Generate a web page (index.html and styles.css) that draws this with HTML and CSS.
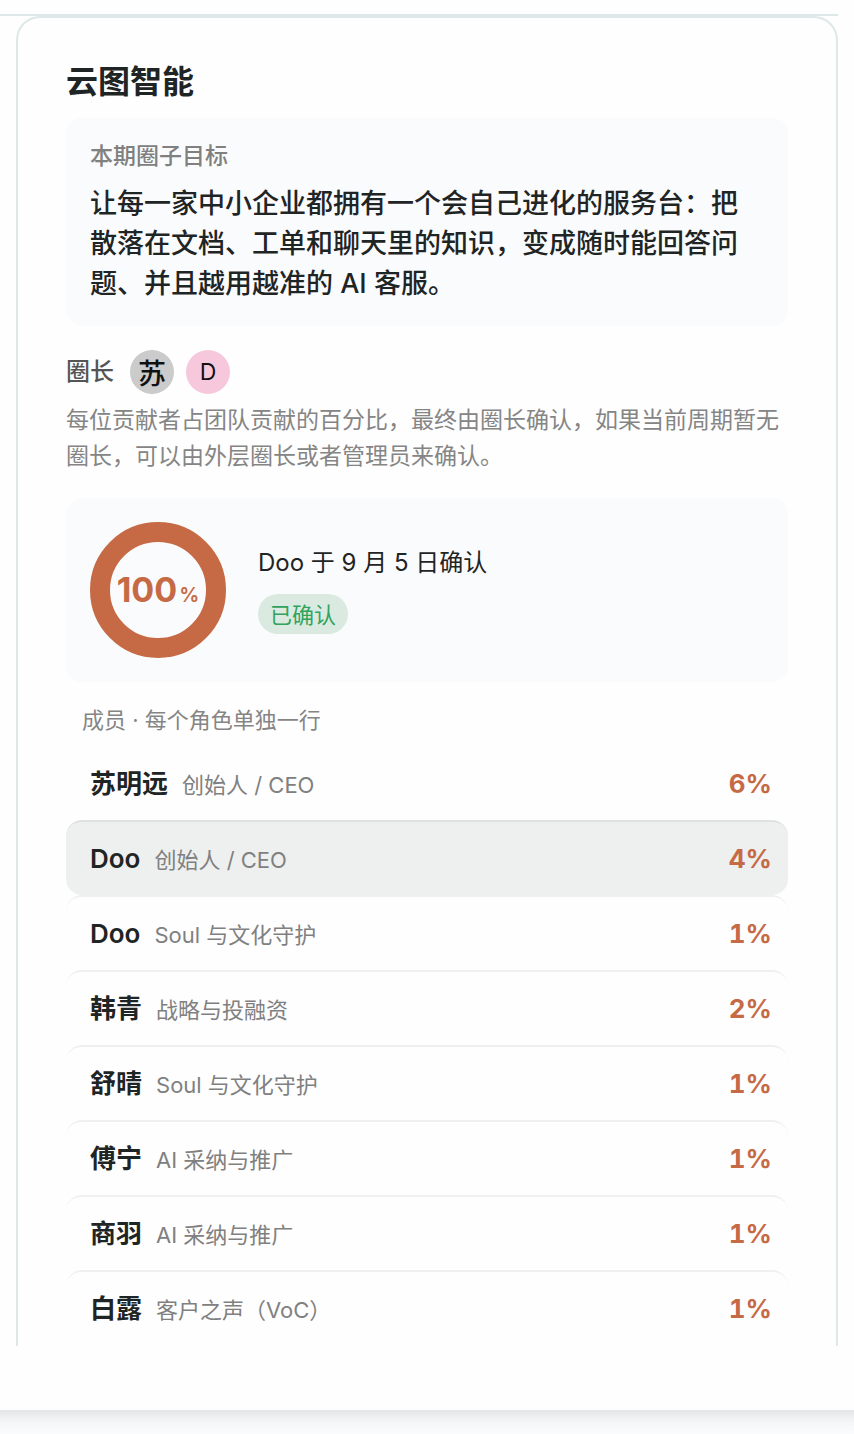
FILE: index.html
```html
<!DOCTYPE html>
<html lang="zh-CN">
<head>
<meta charset="utf-8">
<meta name="viewport" content="width=device-width, initial-scale=1">
<title>云图智能</title>
<link rel="stylesheet" href="styles.css">
</head>
<body>
<main class="sheet">
  <div class="viewport">
    <article class="card">
      <h1 class="title">云图智能</h1>
      <section class="goal">
        <h2 class="goal-label">本期圈子目标</h2>
        <p class="goal-text">让每一家中小企业都拥有一个会自己进化的服务台：把散落在文档、工单和聊天里的知识，变成随时能回答问题、并且越用越准的 AI 客服。</p>
      </section>
      <div class="leads">
        <span class="leads-label">圈长</span>
        <span class="avatar avatar-gray">苏</span>
        <span class="avatar avatar-pink">D</span>
      </div>
      <p class="hint">每位贡献者占团队贡献的百分比，最终由圈长确认，如果当前周期暂无圈长，可以由外层圈长或者管理员来确认。</p>
      <section class="summary">
        <div class="ring"><span class="ring-value">100</span><span class="ring-unit">%</span></div>
        <div class="status">
          <p class="status-text">Doo 于 9 月 5 日确认</p>
          <span class="badge">已确认</span>
        </div>
      </section>
      <h2 class="list-label">成员 · 每个角色单独一行</h2>
      <ul class="members">
        <li class="member"><span class="name">苏明远</span><span class="role">创始人 / CEO</span><span class="share">6%</span></li>
        <li class="member current"><span class="name">Doo</span><span class="role">创始人 / CEO</span><span class="share">4%</span></li>
        <li class="member"><span class="name">Doo</span><span class="role">Soul 与文化守护</span><span class="share">1%</span></li>
        <li class="member"><span class="name">韩青</span><span class="role">战略与投融资</span><span class="share">2%</span></li>
        <li class="member"><span class="name">舒晴</span><span class="role">Soul 与文化守护</span><span class="share">1%</span></li>
        <li class="member"><span class="name">傅宁</span><span class="role">AI 采纳与推广</span><span class="share">1%</span></li>
        <li class="member"><span class="name">商羽</span><span class="role">AI 采纳与推广</span><span class="share">1%</span></li>
        <li class="member"><span class="name">白露</span><span class="role">客户之声（VoC）</span><span class="share">1%</span></li>
      </ul>
    </article>
  </div>
</main>
<div class="backdrop"></div>
</body>
</html>
```

FILE: styles.css
```css
* { box-sizing: border-box; }
body {
  display: flex;
  flex-direction: column;
  min-height: 100vh;
  margin: 0;
  background: #fafbfd;
  color: #1f2424;
  font-family: Inter, "Noto Sans CJK SC", sans-serif;
  font-size: 22px;
}
h1, h2, p, ul { margin: 0; padding: 0; }
.sheet {
  padding: 14px 16px 64px 0;
  background: #fefefe;
}
.backdrop {
  flex: 1;
  min-height: 24px;
  background: linear-gradient(#e3e5e7, #eff1f3 8px, #f7f8fa 16px, #fafbfd 24px);
}
.viewport { border-top: 2px solid #dde9e9; }
.card {
  margin-left: 16px;
  padding: 42px 48px 0;
  border: 2px solid #dde9e9;
  border-bottom: 0;
  border-radius: 24px 24px 0 0;
}
.title { font-size: 32px; line-height: 44px; font-weight: 600; }
.goal {
  margin-top: 14px;
  padding: 20px 24px 22px;
  border-radius: 16px;
  background: #fafbfd;
}
.goal-label { color: #808080; font-size: 23px; line-height: 36px; font-weight: 500; }
.goal-text { margin-top: 10px; font-size: 27px; line-height: 40px; font-weight: 500; }
.leads { display: flex; align-items: center; gap: 12px; margin-top: 24px; }
.leads-label { margin-right: 4px; color: #555; font-size: 24px; line-height: 36px; font-weight: 500; }
.avatar {
  display: grid;
  place-items: center;
  width: 44px;
  height: 44px;
  border-radius: 50%;
  color: #111;
}
.avatar-gray { background: #cbcbcb; font-size: 28px; font-weight: 500; }
.avatar-pink { background: #f7c8dc; font-size: 23px; }
.hint { margin-top: 8px; color: #858585; font-size: 23px; line-height: 36px; }
.summary {
  display: flex;
  align-items: center;
  gap: 32px;
  margin-top: 24px;
  padding: 24px;
  border-radius: 16px;
  background: #fafbfd;
}
.ring {
  display: flex;
  align-items: baseline;
  justify-content: center;
  gap: 2px;
  width: 136px;
  height: 136px;
  border: 20px solid #c66a46;
  border-radius: 50%;
  color: #c66a46;
  line-height: 96px;
}
.ring-value { font-size: 34px; font-weight: 700; }
.ring-unit { font-size: 20px; font-weight: 600; }
.status-text { font-size: 24px; line-height: 34px; }
.badge {
  display: inline-block;
  margin-top: 14px;
  padding: 2px 12px 0;
  border-radius: 20px;
  background: #daeae1;
  color: #31a35c;
  line-height: 38px;
}
.list-label { margin: 20px 16px 7px; color: #858585; font-size: 22px; line-height: 36px; font-weight: 400; }
.members { padding-bottom: 1px; list-style: none; }
.member {
  display: flex;
  align-items: baseline;
  gap: 14px;
  height: 75px;
  padding: 0 16px 0 24px;
  border-top: 2px solid #f0f0f0;
  border-radius: 16px;
  line-height: 73px;
}
.member:first-child { border-top-color: transparent; }
.member.current { background: #eef0ef; border-top-color: #dfe2e1; }
.name { font-size: 26px; font-weight: 600; }
.role { color: #808080; }
.share {
  margin-left: auto;
  color: #c66a46;
  font-size: 26px;
  font-weight: 700;
  font-variant-numeric: tabular-nums;
}
```
